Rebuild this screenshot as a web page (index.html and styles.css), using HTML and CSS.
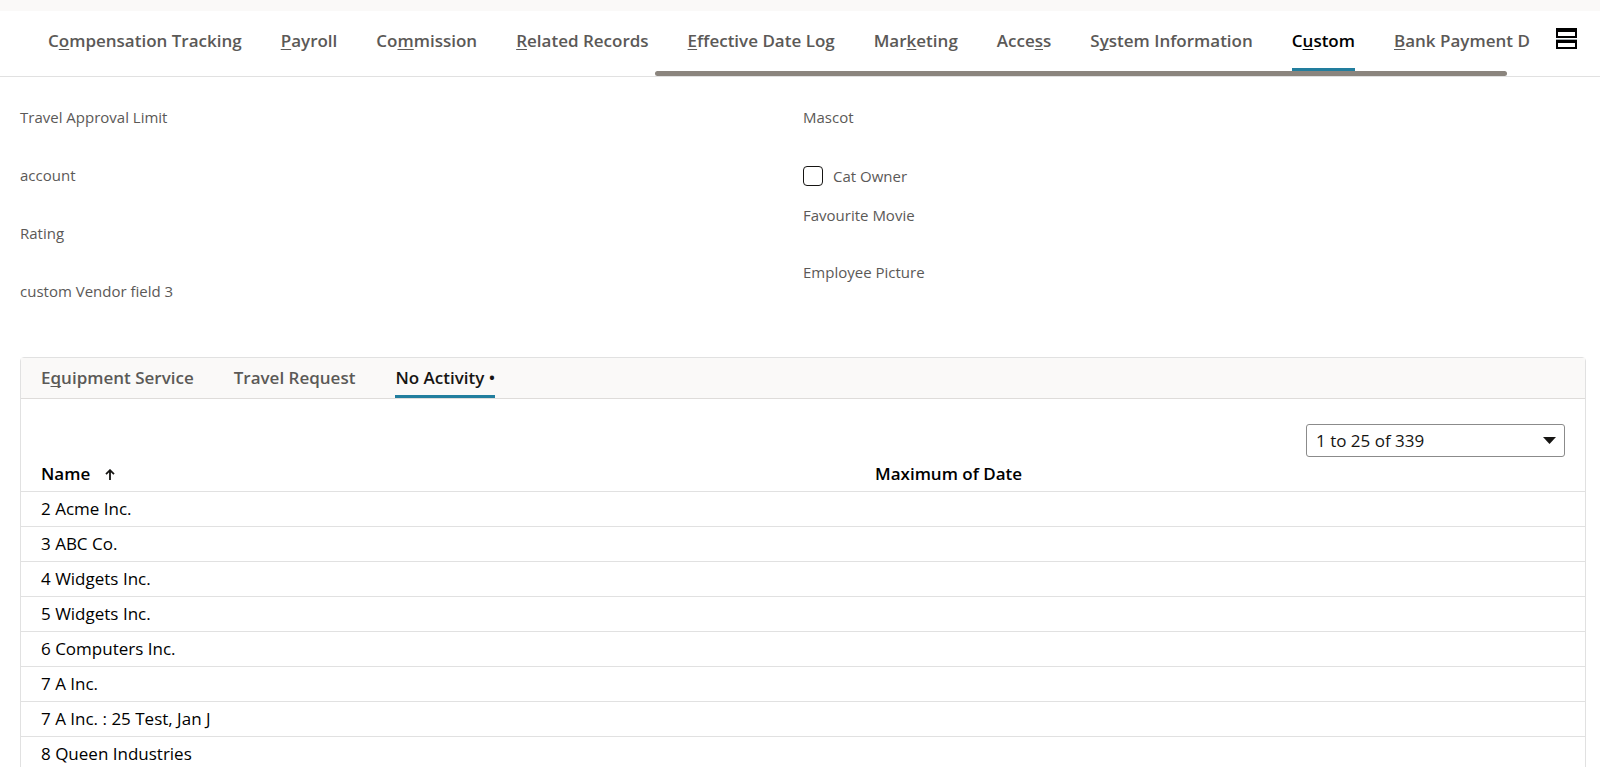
FILE: index.html
```html
<!DOCTYPE html>
<html lang="en">
<head>
<meta charset="utf-8">
<title>Employee - Custom</title>
<link rel="stylesheet" href="styles.css">
</head>
<body>
<div class="top-strip"></div>
<header class="tabbar">
  <nav class="tabs">
    <a class="tab" href="#">C<u>o</u>mpensation Tracking</a>
    <a class="tab" href="#"><u>P</u>ayroll</a>
    <a class="tab" href="#">Co<u>m</u>mission</a>
    <a class="tab" href="#"><u>R</u>elated Records</a>
    <a class="tab" href="#"><u>E</u>ffective Date Log</a>
    <a class="tab" href="#">Mar<u>k</u>eting</a>
    <a class="tab" href="#">Acce<u>s</u>s</a>
    <a class="tab" href="#">S<u>y</u>stem Information</a>
    <a class="tab tab-active" href="#">C<u>u</u>stom</a>
    <a class="tab" href="#"><u>B</u>ank Payment D</a>
  </nav>
  <button class="layout-button" type="button" aria-label="Switch tab layout">
    <svg width="21" height="21" viewBox="0 0 21 21" shape-rendering="crispEdges">
      <path fill="#000" fill-rule="evenodd" d="M0 0h21v10H0zM2 4v4h17V4zM0 12h21v9H0zM2 15v4h17v-4z"/>
      <path fill="#a3aaae" d="M0 11h21v1H0z"/>
    </svg>
  </button>
  <div class="scroll-thumb"></div>
</header>

<main class="content">
  <section class="fields">
    <div class="field-column field-column-wide">
      <div class="field">Travel Approval Limit</div>
      <div class="field">account</div>
      <div class="field">Rating</div>
      <div class="field">custom Vendor field 3</div>
    </div>
    <div class="field-column">
      <div class="field">Mascot</div>
      <div class="check-field">
        <input class="check" type="checkbox" id="cat-owner">
        <label for="cat-owner">Cat Owner</label>
      </div>
      <div class="field">Favourite Movie</div>
      <div class="field">Employee Picture</div>
    </div>
  </section>

  <section class="panel">
    <nav class="subtabs">
      <a class="subtab" href="#">E<u>q</u>uipment Service</a>
      <a class="subtab" href="#">Travel Request</a>
      <a class="subtab subtab-active" href="#">No Activity •</a>
    </nav>
    <div class="pager">
      <select class="range" aria-label="Rows shown">
        <option>1 to 25 of 339</option>
      </select>
      <svg class="range-arrow" width="13" height="7" viewBox="0 0 13 7"><path fill="#161513" d="M0 0h13L6.500 7z"/></svg>
    </div>
    <table class="list">
      <thead>
        <tr>
          <th class="name-column">Name<svg class="sort" width="10" height="11" viewBox="0 0 10 11"><path fill="none" stroke="#161513" stroke-width="1.800" d="M5 11V1.200M1 5.200l4-4 4 4"/></svg></th>
          <th>Maximum of Date</th>
        </tr>
      </thead>
      <tbody>
        <tr><td>2 Acme Inc.</td><td></td></tr>
        <tr><td>3 ABC Co.</td><td></td></tr>
        <tr><td>4 Widgets Inc.</td><td></td></tr>
        <tr><td>5 Widgets Inc.</td><td></td></tr>
        <tr><td>6 Computers Inc.</td><td></td></tr>
        <tr><td>7 A Inc.</td><td></td></tr>
        <tr><td>7 A Inc. : 25 Test, Jan J</td><td></td></tr>
        <tr><td>8 Queen Industries</td><td></td></tr>
      </tbody>
    </table>
  </section>
</main>
</body>
</html>
```
FILE: styles.css
```css
* {
  box-sizing: border-box;
}

html {
  overflow: hidden;
}

body {
  margin: 0;
  background: #fff;
  color: #000;
  font-family: "Open Sans", "Noto Sans", sans-serif;
  font-size: 17px;
  line-height: 24px;
}

a {
  color: inherit;
  text-decoration: none;
}

u {
  text-decoration: underline;
  text-decoration-thickness: 1px;
  text-decoration-skip-ink: none;
  text-underline-offset: 2px;
}

.top-strip {
  height: 11px;
  background: #faf9f8;
}

.tabbar {
  position: relative;
  display: flex;
  justify-content: space-between;
  gap: 16px;
  height: 66px;
  padding: 0 23px 0 48px;
  border-bottom: 1px solid #e1e1e1;
}

.tabs {
  display: flex;
  gap: 39px;
  color: #5b5957;
  font-weight: 600;
  white-space: nowrap;
}

.tab {
  height: 60px;
  padding-top: 18px;
}

.tab-active {
  border-bottom: 3px solid #227e9e;
  color: #000;
}

.layout-button {
  flex: none;
  align-self: flex-start;
  margin: 17px 0 0;
  padding: 0;
  border: 0;
  background: none;
}

.layout-button svg {
  display: block;
}

.scroll-thumb {
  position: absolute;
  right: 93px;
  bottom: 0;
  left: 655px;
  height: 5px;
  border-radius: 3px;
  background: #8b857e;
}

.content {
  padding: 29px 14px 0 20px;
}

.fields {
  display: grid;
  grid-template-columns: 1fr 1fr;
  color: #5b5957;
  font-size: 15px;
  font-weight: 500;
  line-height: 22px;
}

.field {
  height: 57px;
}

.field-column-wide .field {
  height: 58px;
}

.check-field {
  display: flex;
  align-items: center;
  gap: 10px;
  height: 41px;
  padding-bottom: 15px;
}

.check {
  appearance: none;
  width: 20px;
  height: 20px;
  margin: 0;
  border: 1px solid #161513;
  border-radius: 4px;
  background: #fff;
}

.panel {
  margin-top: 19px;
  border: 1px solid #e1e1e1;
  border-radius: 4px;
}

.subtabs {
  display: flex;
  gap: 40px;
  height: 41px;
  padding: 0 20px;
  border-bottom: 1px solid #dedcda;
  background: #faf9f8;
  color: #5b5957;
  font-weight: 600;
}

.subtab {
  height: 40px;
  padding-top: 8px;
}

.subtab-active {
  border-bottom: 3px solid #227e9e;
  color: #161513;
}

.pager {
  position: relative;
  display: flex;
  justify-content: flex-end;
  padding: 25px 20px 0;
}

.range {
  appearance: none;
  width: 259px;
  height: 33px;
  padding: 0 9px;
  border: 1px solid #8b8b8b;
  border-radius: 3px;
  background: #fff;
  color: #161513;
  font: inherit;
}

.range-arrow {
  position: absolute;
  right: 29px;
  bottom: 13px;
  pointer-events: none;
}

.list {
  width: 100%;
  border-collapse: separate;
  border-spacing: 0;
  table-layout: fixed;
}

.list th,
.list td {
  height: 35px;
  padding: 0 20px;
  border-bottom: 1px solid #e1e1e1;
  text-align: left;
}

.list th {
  font-weight: 600;
}

.list .name-column {
  width: 834px;
}

.sort {
  margin-left: 15px;
}
```
